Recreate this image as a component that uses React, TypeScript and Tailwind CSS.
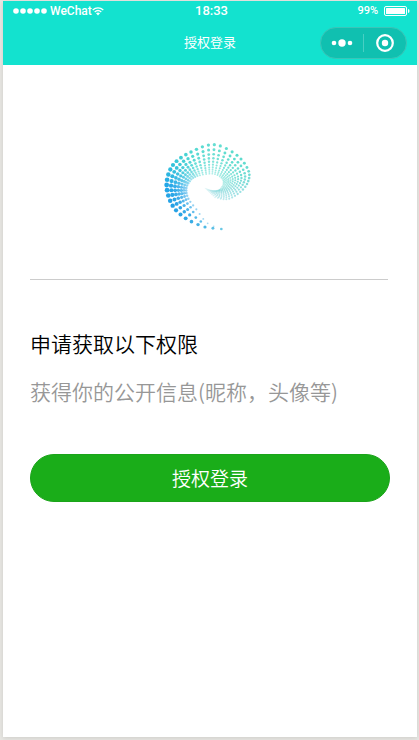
import React from "react";

type Spoke = {
  at: number;
  outer: [number, number];
  inner: [number, number];
  radius: number;
  count: number;
  color: [number, number, number];
  opacity: number;
};

const keys: Spoke[] = [
  { at: 0, outer: [217, 297], inner: [215, 296], radius: 4, count: 1, color: [80, 190, 225], opacity: 0.85 },
  { at: 2, outer: [168, 291], inner: [176, 280], radius: 4.8, count: 2, color: [60, 176, 226], opacity: 0.9 },
  { at: 5, outer: [110, 265], inner: [142, 238], radius: 5.8, count: 4, color: [35, 162, 228], opacity: 0.95 },
  { at: 8, outer: [71, 227], inner: [118, 206], radius: 6.6, count: 6, color: [25, 155, 228], opacity: 0.95 },
  { at: 12, outer: [53, 165], inner: [112, 174], radius: 7.2, count: 7, color: [24, 162, 230], opacity: 0.95 },
  { at: 16, outer: [72, 105], inner: [127, 148], radius: 6.2, count: 8, color: [40, 192, 216], opacity: 0.95 },
  { at: 20, outer: [126, 66], inner: [153, 136], radius: 5.2, count: 9, color: [60, 212, 204], opacity: 0.9 },
  { at: 24, outer: [196, 44], inner: [190, 131], radius: 4.8, count: 10, color: [75, 216, 202], opacity: 0.85 },
  { at: 28, outer: [264, 76], inner: [217, 143], radius: 4.6, count: 11, color: [65, 214, 198], opacity: 0.88 },
  { at: 32, outer: [299, 124], inner: [223, 161], radius: 4.2, count: 12, color: [72, 211, 199], opacity: 0.8 },
  { at: 36, outer: [294, 162], inner: [212, 178], radius: 3.8, count: 12, color: [80, 206, 202], opacity: 0.7 },
  { at: 40, outer: [266, 192], inner: [197, 182], radius: 3.4, count: 12, color: [90, 203, 208], opacity: 0.58 },
  { at: 44, outer: [232, 208], inner: [184, 180], radius: 3, count: 12, color: [105, 206, 213], opacity: 0.46 },
  { at: 48, outer: [198, 202], inner: [168, 174], radius: 2.6, count: 11, color: [130, 212, 220], opacity: 0.3 },
];

const mix = (a: number, b: number, t: number) => a + (b - a) * t;

function spiralDots() {
  const dots: { x: number; y: number; r: number; fill: string; opacity: number }[] = [];
  for (let i = 0; i <= 48; i++) {
    const next = Math.max(1, keys.findIndex((key) => key.at >= i));
    const a = keys[next - 1];
    const b = keys[next];
    const t = (i - a.at) / (b.at - a.at);
    const before = keys[Math.max(0, next - 2)];
    const after = keys[Math.min(keys.length - 1, next + 1)];
    // Hermite interpolation keeps the ring of dots smoothly curved.
    const curve = (pick: (s: Spoke) => number) => {
      const span = b.at - a.at;
      const m0 = ((pick(b) - pick(before)) / (b.at - before.at)) * span;
      const m1 = ((pick(after) - pick(a)) / (after.at - a.at)) * span;
      const t2 = t * t;
      const t3 = t2 * t;
      return (2 * t3 - 3 * t2 + 1) * pick(a) + (t3 - 2 * t2 + t) * m0 + (3 * t2 - 2 * t3) * pick(b) + (t3 - t2) * m1;
    };
    const ox = curve((s) => s.outer[0]);
    const oy = curve((s) => s.outer[1]);
    const ix = curve((s) => s.inner[0]);
    const iy = curve((s) => s.inner[1]);
    const count = Math.round(mix(a.count, b.count, t));
    const radius = mix(a.radius, b.radius, t);
    const color = a.color.map((c, n) => Math.round(mix(c, b.color[n], t)));
    const end = 1 - Math.pow(0.88, Math.max(1, count - 1));
    for (let j = 0; j < count; j++) {
      const d = (1 - Math.pow(0.88, j)) / end;
      dots.push({
        x: mix(ox, ix, d),
        y: mix(oy, iy, d),
        r: radius * (1 - 0.45 * d),
        fill: `rgb(${color.join(",")})`,
        opacity: mix(a.opacity, b.opacity, t) * (1 - 0.5 * d * d),
      });
    }
  }
  return dots;
}

function Logo() {
  return (
    <svg viewBox="0 0 360 330" className="h-[110px] w-[120px]" role="img" aria-label="Logo">
      {spiralDots().map((dot, n) => (
        <circle key={n} cx={dot.x} cy={dot.y} r={dot.r} fill={dot.fill} opacity={dot.opacity} />
      ))}
    </svg>
  );
}

function StatusBar() {
  return (
    <div className="grid h-5 grid-cols-3 items-center pr-[7px] pl-[10px] font-['Roboto','Liberation_Sans',sans-serif] text-xs leading-5 font-medium">
      <div className="flex items-center">
        <svg viewBox="0 0 34 6" className="mr-[3px] h-[6px] w-[34px]" fill="white" aria-hidden="true">
          <circle cx="3" cy="3" r="2.8" />
          <circle cx="10" cy="3" r="2.8" />
          <circle cx="17" cy="3" r="2.8" />
          <circle cx="24" cy="3" r="2.8" />
          <circle cx="31" cy="3" r="2.8" />
        </svg>
        <span>WeChat</span>
        <svg viewBox="0 0 12 9" className="h-[9px] w-3" fill="none" stroke="white" strokeWidth="1.3" aria-hidden="true">
          <path d="M.7 3C3.8.1 8.2.1 11.3 3" />
          <path d="M2.7 5C4.7 3.2 7.3 3.2 9.3 5" />
          <path d="M4 6.3Q6 4.8 8 6.3L6 8.6Z" fill="white" stroke="none" />
        </svg>
      </div>
      <span className="text-center text-[13px]">18:33</span>
      <div className="flex items-center justify-end gap-[6px]">
        <span className="text-[11px]">99%</span>
        <svg viewBox="0 0 26 10" className="h-[10px] w-[26px]" aria-hidden="true">
          <rect x=".5" y=".5" width="22" height="9" rx="1.5" fill="none" stroke="white" />
          <rect x="2" y="2" width="19" height="6" rx=".5" fill="white" />
          <path d="M24 3Q25.5 3.2 25.5 5T24 7Z" fill="white" />
        </svg>
      </div>
    </div>
  );
}

function NavBar() {
  return (
    <div className="grid h-11 grid-cols-[1fr_auto_1fr] items-center pr-[10px]">
      <span />
      <h1 className="pb-[2px] pl-[10px] text-[13px] leading-5">授权登录</h1>
      <div className="flex h-8 w-[87px] items-center justify-self-end rounded-full border border-[#3bc5b8] bg-[#10c0b0]">
        <button type="button" aria-label="更多" className="flex h-full flex-1 items-center justify-center">
          <svg viewBox="0 0 22 8" className="h-2 w-[22px]" fill="white" aria-hidden="true">
            <circle cx="3" cy="4" r="2.3" />
            <circle cx="11" cy="4" r="3.7" />
            <circle cx="19" cy="4" r="2.3" />
          </svg>
        </button>
        <span className="h-[18px] w-px bg-[#48cfc3]" />
        <button type="button" aria-label="关闭" className="flex h-full flex-1 items-center justify-center">
          <svg viewBox="0 0 18 18" className="size-[18px]" aria-hidden="true">
            <circle cx="9" cy="9" r="7.8" fill="none" stroke="white" strokeWidth="2.2" />
            <circle cx="9" cy="9" r="3.2" fill="white" />
          </svg>
        </button>
      </div>
    </div>
  );
}

export default function App() {
  return (
    <div className="flex min-h-screen flex-col bg-[#e8e7e3] pt-px pr-[2px] pb-[3px] pl-[3px] font-['Noto_Sans_CJK_SC',sans-serif]">
      <div className="flex flex-1 flex-col bg-white shadow-[0_1px_5px_rgba(0,0,0,0.12)]">
        <header className="bg-[#13e2cf] text-white">
          <StatusBar />
          <NavBar />
        </header>
        <main className="px-[27px] pt-[65px]">
          <div className="mr-[2px] flex justify-center border-b border-[#cccccc] pb-[39px]">
            <Logo />
          </div>
          <h2 className="mt-[47px] text-[21px] leading-8 font-[350] text-black">申请获取以下权限</h2>
          <p className="mt-4 text-[21px] leading-8 font-[350] text-[#979797]">获得你的公开信息(昵称，头像等)</p>
          <button
            type="button"
            className="mt-[47px] h-12 w-full rounded-full border border-[#1ba41a] bg-[#1aad19] text-[19px] font-[350] text-white"
          >
            授权登录
          </button>
        </main>
      </div>
    </div>
  );
}
